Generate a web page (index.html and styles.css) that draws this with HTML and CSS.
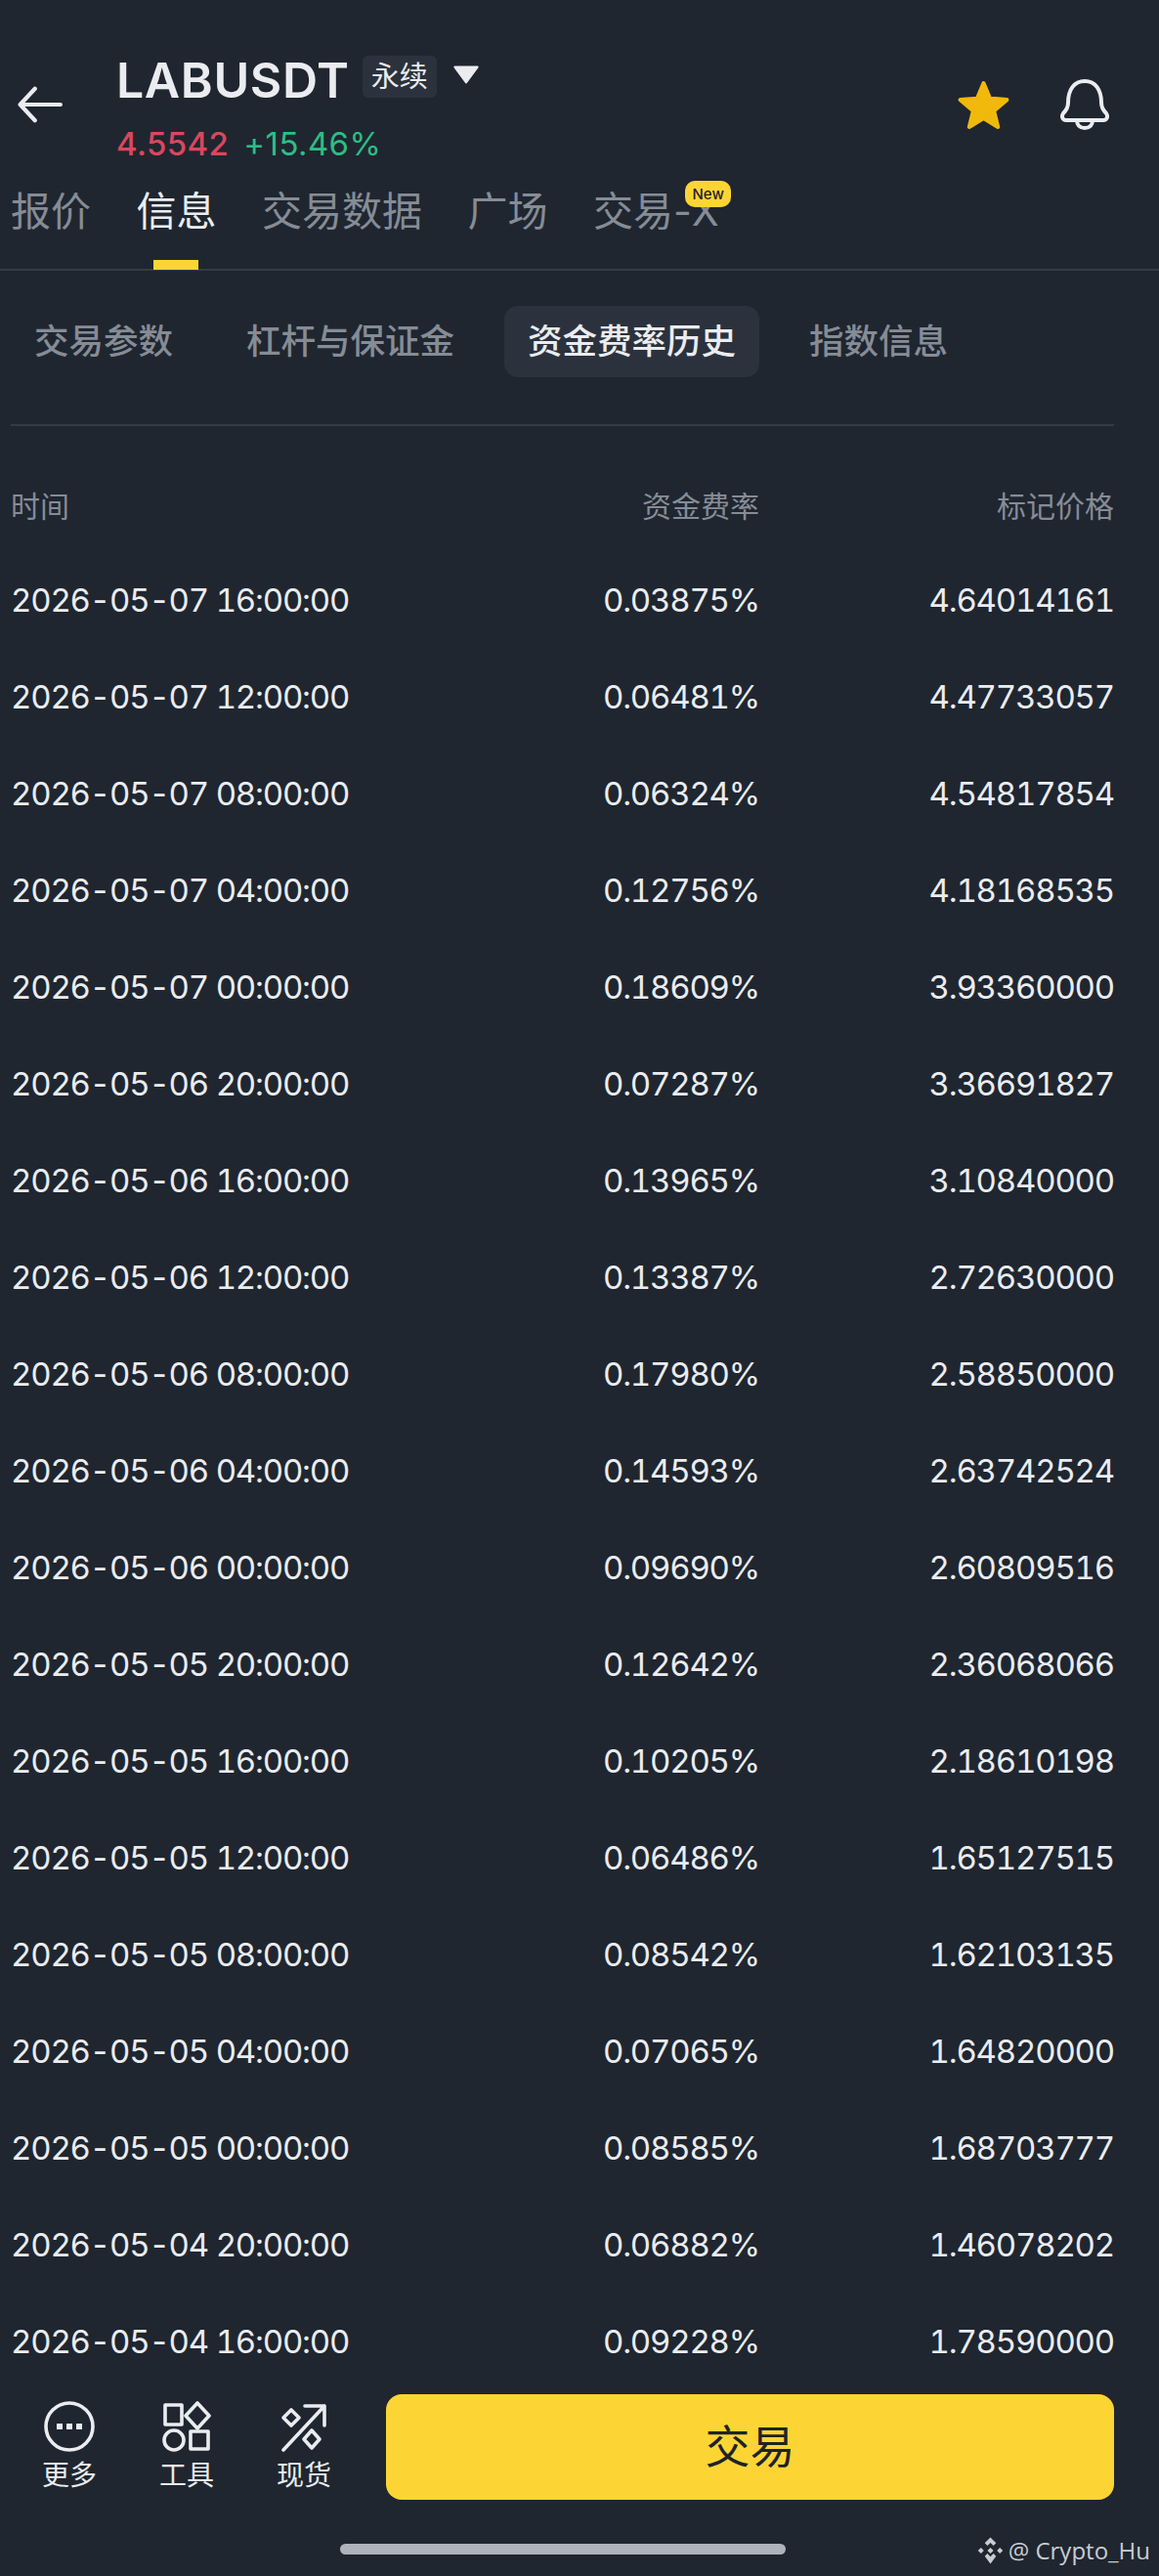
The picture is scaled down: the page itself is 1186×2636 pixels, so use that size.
FILE: index.html
```html
<!DOCTYPE html>
<html lang="zh">
<head>
<meta charset="utf-8">
<title>LABUSDT</title>
<link rel="stylesheet" href="styles.css">
</head>
<body>
<div class="page">
  <header class="top">
    <svg class="back" viewBox="0 0 44 36" fill="none"><path d="M2.500 18h39.500M17 2.500 2.500 18 17 33.500" stroke="#eaecef" stroke-width="4" stroke-linecap="round" stroke-linejoin="round"/></svg>
    <div class="title">
      <div class="title-row">
        <span class="symbol">LABUSDT</span>
        <span class="perp">永续</span>
        <svg class="caret" viewBox="0 0 26 18"><path d="M2 1.500h22L13 16.500z" fill="#eaecef" stroke="#eaecef" stroke-width="2" stroke-linejoin="round"/></svg>
      </div>
      <div class="price-row"><span class="price">4.5542</span><span class="change">+15.46%</span></div>
    </div>
    <div class="top-icons">
      <svg class="star" viewBox="0 0 52 50"><path d="M26 3l6.400 15.300 17 1.400-13 11.100 4 16.200L26 38.300 11.600 47l4-16.200-13-11.100 17-1.400z" fill="#f0b90b" stroke="#f0b90b" stroke-width="4" stroke-linejoin="round"/></svg>
      <svg class="bell" viewBox="0 0 50 52" fill="none" stroke="#eaecef" stroke-width="4" stroke-linejoin="round"><path d="M8 24C8 11 14 2 25 2s17 9 17 22c0 5 2 8 5 11 2 3 1 7-3 7H6c-4 0-5-4-3-7 3-3 5-6 5-11z"/><path d="M17 42c0 5 3 8 8 8s8-3 8-8"/></svg>
    </div>
  </header>
  <nav class="tabs">
    <span class="tab">报价</span>
    <span class="tab active">信息</span>
    <span class="tab">交易数据</span>
    <span class="tab">广场</span>
    <span class="tab">交易-X<b class="new">New</b></span>
  </nav>
  <nav class="subtabs">
    <span class="subtab">交易参数</span>
    <span class="subtab">杠杆与保证金</span>
    <span class="subtab on">资金费率历史</span>
    <span class="subtab">指数信息</span>
  </nav>
  <section class="table">
    <div class="row head"><span>时间</span><span>资金费率</span><span>标记价格</span></div>
    <div class="row"><span>2026-05-07 16:00:00</span><span>0.03875%</span><span>4.64014161</span></div>
    <div class="row"><span>2026-05-07 12:00:00</span><span>0.06481%</span><span>4.47733057</span></div>
    <div class="row"><span>2026-05-07 08:00:00</span><span>0.06324%</span><span>4.54817854</span></div>
    <div class="row"><span>2026-05-07 04:00:00</span><span>0.12756%</span><span>4.18168535</span></div>
    <div class="row"><span>2026-05-07 00:00:00</span><span>0.18609%</span><span>3.93360000</span></div>
    <div class="row"><span>2026-05-06 20:00:00</span><span>0.07287%</span><span>3.36691827</span></div>
    <div class="row"><span>2026-05-06 16:00:00</span><span>0.13965%</span><span>3.10840000</span></div>
    <div class="row"><span>2026-05-06 12:00:00</span><span>0.13387%</span><span>2.72630000</span></div>
    <div class="row"><span>2026-05-06 08:00:00</span><span>0.17980%</span><span>2.58850000</span></div>
    <div class="row"><span>2026-05-06 04:00:00</span><span>0.14593%</span><span>2.63742524</span></div>
    <div class="row"><span>2026-05-06 00:00:00</span><span>0.09690%</span><span>2.60809516</span></div>
    <div class="row"><span>2026-05-05 20:00:00</span><span>0.12642%</span><span>2.36068066</span></div>
    <div class="row"><span>2026-05-05 16:00:00</span><span>0.10205%</span><span>2.18610198</span></div>
    <div class="row"><span>2026-05-05 12:00:00</span><span>0.06486%</span><span>1.65127515</span></div>
    <div class="row"><span>2026-05-05 08:00:00</span><span>0.08542%</span><span>1.62103135</span></div>
    <div class="row"><span>2026-05-05 04:00:00</span><span>0.07065%</span><span>1.64820000</span></div>
    <div class="row"><span>2026-05-05 00:00:00</span><span>0.08585%</span><span>1.68703777</span></div>
    <div class="row"><span>2026-05-04 20:00:00</span><span>0.06882%</span><span>1.46078202</span></div>
    <div class="row"><span>2026-05-04 16:00:00</span><span>0.09228%</span><span>1.78590000</span></div>
  </section>
  <footer class="bottom">
    <div class="actions">
      <div class="tool">
        <svg viewBox="0 0 52 52" fill="none" stroke="#eaecef" stroke-width="3.600"><circle cx="26" cy="26" r="24"/><path d="M13 23h6v6h-6zM23 23h6v6h-6zM33 23h6v6h-6z" fill="#eaecef" stroke="none"/></svg>
        <span>更多</span>
      </div>
      <div class="tool">
        <svg viewBox="0 0 52 52" fill="none" stroke="#eaecef" stroke-width="3.600" stroke-linejoin="round"><rect x="4" y="4" width="17" height="20"/><path d="M37 2l12 13-12 13-12-13z"/><circle cx="13" cy="40" r="10"/><rect x="30" y="31" width="18" height="18"/></svg>
        <span>工具</span>
      </div>
      <div class="tool">
        <svg viewBox="0 0 52 52" fill="none" stroke="#eaecef" stroke-width="3.600" stroke-linecap="round" stroke-linejoin="round"><path d="M5 50 47 5M27 5h20v20"/><path d="M13 9l8 8-8 8-8-8zM34 30l8 9-8 9-8-9z"/></svg>
        <span>现货</span>
      </div>
      <button class="trade">交易</button>
    </div>
    <i class="home-bar"></i>
  </footer>
  <div class="mark">
    <svg viewBox="0 0 28 28" fill="#c9ccd2"><path d="M14 0l6 6-2.800 2.800L14 5.600l-3.200 3.200L8 6zM4 10.800 7 14l-3 3.200L.8 14zM24 10.800l3.200 3.200-3.200 3.200-3-3.200zM14 10.800l3.200 3.200-3.200 3.200-3.200-3.200zM8 20l2.800-2.800 3.200 3.200 3.200-3.200L20 20l-6 8z"/></svg>
    <span>@ Crypto_Hu</span>
  </div>
</div>
</body>
</html>
```
FILE: styles.css
```css
* { box-sizing: border-box; }
html, body { margin: 0; padding: 0; }
body {
  background: #1f2630;
  font-family: Inter, "Noto Sans CJK SC", sans-serif;
  color: #eaecef;
}
.page {
  width: 1186px;
  height: 2636px;
  position: relative;
  overflow: hidden;
  background: #1f2630;
  display: flex;
  flex-direction: column;
}

.top { display: flex; align-items: flex-start; height: 188px; padding: 52px 51px 0 18px; flex: none; }
.back { width: 46px; height: 38px; margin-top: 36px; flex: none; }
.title { margin-left: 55px; flex: 1; }
.title-row { display: flex; align-items: center; height: 60px; }
.symbol { font-size: 50px; font-weight: 600; letter-spacing: 0.6px; line-height: 60px; }
.perp { margin-left: 13px; background: #2b323d; border-radius: 6px; font-size: 29px; line-height: 43px; padding: 0 9px; height: 43px; margin-top: -8px; }
.caret { width: 28px; height: 19px; margin-left: 16px; margin-top: -11px; }
.price-row { display: flex; gap: 15px; font-size: 33px; line-height: 40px; margin-top: 15px; font-weight: 500; letter-spacing: 0.4px; }
.price { color: #d9475f; }
.change { color: #2ebd85; font-weight: 400; }
.top-icons { display: flex; align-items: center; gap: 52px; margin-top: 28px; }
.star { width: 53px; height: 51px; }
.bell { width: 50px; height: 54px; }

.tabs { display: flex; gap: 46.500px; height: 89px; padding-left: 11px; border-bottom: 2px solid #333b47; flex: none; }
.tab { font-size: 41px; line-height: 50px; color: #868c95; position: relative; padding-top: 3px; height: 87px; }
.active { color: #eaecef; }
.active::after { content: ""; position: absolute; left: 17px; bottom: -1px; width: 46px; height: 10px; background: #fcd535; }
.new { position: absolute; right: -12px; top: -3px; background: #fcd535; color: #1e2329; font-weight: 500; font-size: 15px; line-height: 27px; padding: 0 7px; border-radius: 10px; }

.subtabs { display: flex; align-items: center; gap: 27px; margin-top: 36px; padding-left: 11px; height: 73px; flex: none; }
.subtab { font-size: 35.500px; line-height: 73px; padding: 0 24px; color: #868c95; border-radius: 14px; font-weight: 500; }
.subtab.on { background: #2b323d; color: #eaecef; }

.table { margin: 48px 46px 0 11px; border-top: 2px solid #333b47; flex: 1; min-height: 0; }
.row { display: grid; grid-template-columns: 1fr 300px 363px; height: 99px; align-items: center; font-size: 33px; letter-spacing: -1.200px; color: #eaecef; font-variant-numeric: tabular-nums; }
.row span:nth-child(n+2) { text-align: right; }
.head { height: 40px; margin-top: 62px; margin-bottom: 26px; font-size: 30px; letter-spacing: 0; color: #868c95; }
.head span { line-height: 40px; }

.bottom { flex: none; height: 191px; padding-top: 5px; display: flex; flex-direction: column; }
.actions { display: flex; height: 108px; padding: 0 46px 0 11px; }
.tool { width: 120px; display: flex; flex-direction: column; align-items: center; font-size: 28px; line-height: 38px; padding-top: 7px; }
.tool svg { width: 52px; height: 52px; margin-bottom: 5px; flex: none; }
.trade { margin-left: 24px; flex: 1; height: 108px; border: 0; border-radius: 16px; background: #fcd535; color: #1e2329; font-size: 46px; font-family: "Noto Sans CJK SC", sans-serif; padding: 0 0 8px; }
.home-bar { display: block; width: 456px; height: 11px; margin: 45px 0 0 348px; border-radius: 6px; background: #aeb2ba; }

.mark { position: absolute; right: 9px; top: 2593px; display: flex; align-items: center; gap: 5px; font-family: "Open Sans", sans-serif; font-size: 24px; line-height: 34px; color: #c9ccd2; }
.mark svg { width: 27px; height: 28px; }
```
